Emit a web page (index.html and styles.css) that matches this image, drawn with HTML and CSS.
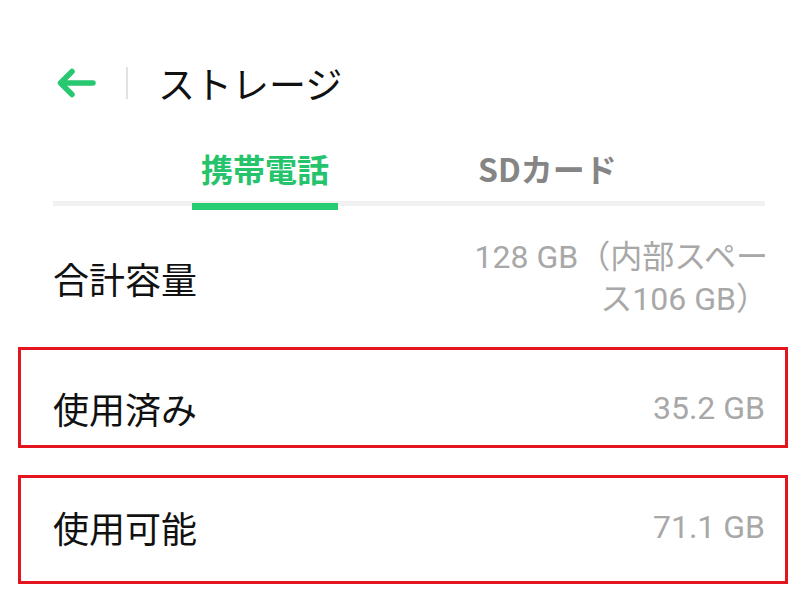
FILE: index.html
```html
<!DOCTYPE html>
<html lang="ja">
<head>
<meta charset="utf-8">
<link rel="stylesheet" href="styles.css">
</head>
<body>
<div class="screen">
  <header class="header">
    <svg class="back" width="42" height="30" viewBox="0 0 42 30" aria-hidden="true">
      <path d="M37 15 H5 M16 3.5 L4.5 15 L16 26.5" fill="none" stroke="#27c870" stroke-width="5.5" stroke-linecap="round" stroke-linejoin="round"/>
    </svg>
    <span class="divider"></span>
    <h1 class="title">ストレージ</h1>
  </header>
  <nav class="tabs">
    <div class="tab active">携帯電話</div>
    <div class="tab">SDカード</div>
  </nav>
  <div class="row total">
    <span class="label">合計容量</span>
    <span class="value multi">128 GB（内部スペース106 GB）</span>
  </div>
  <div class="row boxed used">
    <span class="label">使用済み</span>
    <span class="value">35.2 GB</span>
  </div>
  <div class="row boxed avail">
    <span class="label">使用可能</span>
    <span class="value">71.1 GB</span>
  </div>
</div>
</body>
</html>
```
FILE: styles.css
```css
html, body {
  margin: 0;
  padding: 0;
  background: #fff;
}
.screen {
  width: 800px;
  height: 601px;
  overflow: hidden;
  padding: 0 35px 0 53px;
  box-sizing: border-box;
  font-family: "Noto Sans CJK JP", "Noto Sans", sans-serif;
}
.header {
  height: 130px;
  display: flex;
  align-items: center;
  padding-top: 36px;
  box-sizing: border-box;
}
.back {
  margin-left: 3px;
  display: block;
}
.divider {
  width: 2px;
  height: 32px;
  background: #e2e2e2;
  margin-left: 28px;
}
.title {
  margin: 0 0 0 30px;
  font-size: 37px;
  font-weight: 400;
  color: #111;
  line-height: 1;
}
.tabs {
  display: flex;
  height: 76px;
  align-items: center;
  border-bottom: 5px solid #f1f1f1;
  box-sizing: border-box;
  width: 712px;
  gap: 130px;
}
.tab {
  font-size: 32px;
  font-weight: 700;
  color: #858585;
  height: 76px;
  display: flex;
  align-items: center;
  justify-content: center;
  box-sizing: border-box;
  padding: 4px 10px 0;
  position: relative;
}
.tab.active {
  color: #25c46c;
  margin-left: 139px;
  width: 146px;
  padding: 4px 0 0;
}
.tab.active::after {
  content: "";
  position: absolute;
  left: 0;
  right: 0;
  bottom: -6px;
  height: 7px;
  background: #25cc72;
}
.row {
  display: flex;
  align-items: center;
  justify-content: space-between;
  width: 712px;
  box-sizing: border-box;
}
.label {
  font-size: 36px;
  color: #111;
  line-height: 1;
}
.value {
  font-family: Roboto, "Noto Sans CJK JP", sans-serif;
  font-size: 32px;
  color: #a8a8a8;
  text-align: right;
  margin-right: -3px;
}
.value.multi {
  width: 310px;
  line-height: 42px;
}
.total {
  height: 141px;
  padding-top: 3px;
}
.boxed {
  width: 770px;
  margin-left: -35px;
  padding: 0 23px 0 32px;
  border: 3px solid #e3141e;
}
.used {
  height: 101px;
  padding-top: 20px;
}
.avail {
  margin-top: 27px;
  height: 109px;
  padding-bottom: 5px;
}
```
